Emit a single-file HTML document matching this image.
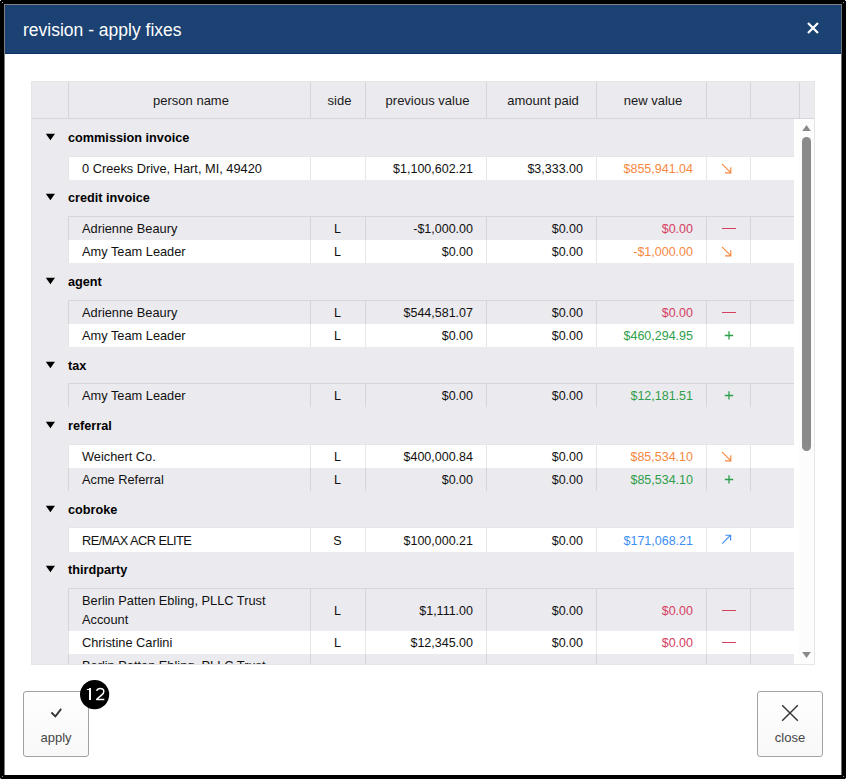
<!DOCTYPE html>
<html><head><meta charset="utf-8"><style>
html,body{margin:0;padding:0;}
body{width:846px;height:779px;background:#000;position:relative;overflow:hidden;font-family:"Liberation Sans",sans-serif;}
#dlg{position:absolute;left:4px;top:4px;width:836px;height:770px;background:#fff;border-left:1px solid #7f7f7f;border-top:1px solid #808080;border-right:1px solid #707070;}
#hdr{position:absolute;left:5px;top:5px;width:836px;height:48px;background:#1b4273;border-bottom:1px solid #0c3265;}
#title{position:absolute;left:23px;top:6px;height:48px;line-height:48px;color:#fff;font-size:17.5px;white-space:nowrap;}
#x{position:absolute;left:805px;top:20px;}
#tbl{position:absolute;left:31px;top:81px;width:782px;height:582px;border:1px solid #e6e6e6;background:#ebeaef;overflow:hidden;}
#clip{position:absolute;left:0;top:0;width:846px;height:665px;overflow:hidden;}
.th{position:absolute;top:83px;height:36px;line-height:36px;font-size:13px;color:#1a1a1a;text-align:center;white-space:nowrap;padding-left:3px;box-sizing:border-box;}
.thb{position:absolute;top:82px;width:1px;height:36px;background:#d6d5da;}
#hline{position:absolute;left:32px;top:118px;width:782px;height:1px;background:#d6d5da;}
.tri{position:absolute;left:44px;}
.gname{position:absolute;left:68px;font-size:12.7px;font-weight:bold;color:#000;white-space:nowrap;}
.hb{position:absolute;left:68px;width:726px;height:1px;}
.row{position:absolute;left:69px;width:725px;}
.vb{position:absolute;width:1px;}
.t{position:absolute;font-size:12.5px;color:#111;white-space:nowrap;}
.name{left:82px;font-size:12.8px;}
.side{left:310px;width:55px;text-align:center;}
.prev{left:365px;width:108px;text-align:right;}
.paid{left:486px;width:97px;text-align:right;}
.new{left:596px;width:97px;text-align:right;}
.ic{position:absolute;}
#sb{position:absolute;left:794px;top:119px;width:20px;height:545px;background:#fff;}
#sbt{position:absolute;left:799px;top:119px;width:15px;height:545px;background:#fcfcfc;}
#thumb{position:absolute;left:802px;top:137px;width:9px;height:314px;border-radius:4.5px;background:#8a8a8a;}
.btn{position:absolute;top:691px;width:64px;height:64px;border:1px solid #a2a2a2;border-radius:3px;background:linear-gradient(#fefefe,#f8f8f8);}
.btxt{position:absolute;font-size:13px;color:#464646;white-space:nowrap;text-align:center;}
#badge{position:absolute;left:80px;top:680px;width:29px;height:29px;border-radius:50%;background:#000;color:#fff;font-size:16px;line-height:29px;text-align:center;}
</style></head><body>
<div id="dlg"></div>
<div id="hdr"></div>
<div id="title">revision - apply fixes</div>
<svg id="x" width="16" height="16" viewBox="0 0 16 16"><path d="M3 3 L13 13 M13 3 L3 13" stroke="#fff" stroke-width="2.2" fill="none"/></svg>
<div id="clip">
<div id="tbl"></div>
<div class="thb" style="left:68px"></div>
<div class="thb" style="left:310px"></div>
<div class="thb" style="left:365px"></div>
<div class="thb" style="left:486px"></div>
<div class="thb" style="left:596px"></div>
<div class="thb" style="left:706px"></div>
<div class="thb" style="left:750px"></div>
<div class="thb" style="left:799px"></div>
<div class="th" style="left:69px;width:241px">person name</div>
<div class="th" style="left:311px;width:54px">side</div>
<div class="th" style="left:366px;width:120px">previous value</div>
<div class="th" style="left:487px;width:109px">amount paid</div>
<div class="th" style="left:597px;width:109px">new value</div>
<div id="hline"></div>
<svg class="tri" style="top:132px" width="13" height="10" viewBox="0 0 13 10"><path d="M1.8 1.8 H11 L6.4 8.2 Z" fill="#000"/></svg>
<div class="gname" style="top:120px;height:37px;line-height:37px">commission invoice</div>
<div class="hb" style="top:156px;background:#e6e6e6"></div>
<div class="row" style="top:157px;height:23px;background:#ffffff"></div>
<div class="vb" style="left:68px;top:157px;height:23px;background:#e6e6e6"></div>
<div class="vb" style="left:310px;top:157px;height:23px;background:#e6e6e6"></div>
<div class="vb" style="left:365px;top:157px;height:23px;background:#e6e6e6"></div>
<div class="vb" style="left:486px;top:157px;height:23px;background:#e6e6e6"></div>
<div class="vb" style="left:596px;top:157px;height:23px;background:#e6e6e6"></div>
<div class="vb" style="left:706px;top:157px;height:23px;background:#e6e6e6"></div>
<div class="vb" style="left:750px;top:157px;height:23px;background:#e6e6e6"></div>
<div class="t name" style="top:157px;line-height:23px">0 Creeks Drive, Hart, MI, 49420</div>
<div class="t side" style="top:158px;line-height:23px"></div>
<div class="t prev" style="top:158px;line-height:23px">$1,100,602.21</div>
<div class="t paid" style="top:158px;line-height:23px">$3,333.00</div>
<div class="t new" style="top:158px;line-height:23px;color:#f7883f">$855,941.04</div>
<svg class="ic" style="left:719px;top:161px" width="16" height="16" viewBox="0 0 16 16"><path d="M3 2.8 L11.8 11.6 M11.8 6.2 V11.8 H6" fill="none" stroke="#f7883f" stroke-width="1.15"/></svg>
<svg class="tri" style="top:192px" width="13" height="10" viewBox="0 0 13 10"><path d="M1.8 1.8 H11 L6.4 8.2 Z" fill="#000"/></svg>
<div class="gname" style="top:180px;height:36px;line-height:36px">credit invoice</div>
<div class="hb" style="top:216px;background:#d6d5da"></div>
<div class="row" style="top:217px;height:23px;background:#ebeaef"></div>
<div class="vb" style="left:68px;top:217px;height:23px;background:#d6d5da"></div>
<div class="vb" style="left:310px;top:217px;height:23px;background:#d6d5da"></div>
<div class="vb" style="left:365px;top:217px;height:23px;background:#d6d5da"></div>
<div class="vb" style="left:486px;top:217px;height:23px;background:#d6d5da"></div>
<div class="vb" style="left:596px;top:217px;height:23px;background:#d6d5da"></div>
<div class="vb" style="left:706px;top:217px;height:23px;background:#d6d5da"></div>
<div class="vb" style="left:750px;top:217px;height:23px;background:#d6d5da"></div>
<div class="t name" style="top:217px;line-height:23px">Adrienne Beaury</div>
<div class="t side" style="top:218px;line-height:23px">L</div>
<div class="t prev" style="top:218px;line-height:23px">-$1,000.00</div>
<div class="t paid" style="top:218px;line-height:23px">$0.00</div>
<div class="t new" style="top:218px;line-height:23px;color:#d6405f">$0.00</div>
<div class="ic" style="left:722px;top:228px;width:14px;height:1.4px;background:#d6405f"></div>
<div class="row" style="top:240px;height:23px;background:#ffffff"></div>
<div class="vb" style="left:68px;top:240px;height:23px;background:#e6e6e6"></div>
<div class="vb" style="left:310px;top:240px;height:23px;background:#e6e6e6"></div>
<div class="vb" style="left:365px;top:240px;height:23px;background:#e6e6e6"></div>
<div class="vb" style="left:486px;top:240px;height:23px;background:#e6e6e6"></div>
<div class="vb" style="left:596px;top:240px;height:23px;background:#e6e6e6"></div>
<div class="vb" style="left:706px;top:240px;height:23px;background:#e6e6e6"></div>
<div class="vb" style="left:750px;top:240px;height:23px;background:#e6e6e6"></div>
<div class="t name" style="top:240px;line-height:23px">Amy Team Leader</div>
<div class="t side" style="top:241px;line-height:23px">L</div>
<div class="t prev" style="top:241px;line-height:23px">$0.00</div>
<div class="t paid" style="top:241px;line-height:23px">$0.00</div>
<div class="t new" style="top:241px;line-height:23px;color:#f7883f">-$1,000.00</div>
<svg class="ic" style="left:719px;top:244px" width="16" height="16" viewBox="0 0 16 16"><path d="M3 2.8 L11.8 11.6 M11.8 6.2 V11.8 H6" fill="none" stroke="#f7883f" stroke-width="1.15"/></svg>
<svg class="tri" style="top:276px" width="13" height="10" viewBox="0 0 13 10"><path d="M1.8 1.8 H11 L6.4 8.2 Z" fill="#000"/></svg>
<div class="gname" style="top:264px;height:37px;line-height:37px">agent</div>
<div class="hb" style="top:300px;background:#d6d5da"></div>
<div class="row" style="top:301px;height:23px;background:#ebeaef"></div>
<div class="vb" style="left:68px;top:301px;height:23px;background:#d6d5da"></div>
<div class="vb" style="left:310px;top:301px;height:23px;background:#d6d5da"></div>
<div class="vb" style="left:365px;top:301px;height:23px;background:#d6d5da"></div>
<div class="vb" style="left:486px;top:301px;height:23px;background:#d6d5da"></div>
<div class="vb" style="left:596px;top:301px;height:23px;background:#d6d5da"></div>
<div class="vb" style="left:706px;top:301px;height:23px;background:#d6d5da"></div>
<div class="vb" style="left:750px;top:301px;height:23px;background:#d6d5da"></div>
<div class="t name" style="top:301px;line-height:23px">Adrienne Beaury</div>
<div class="t side" style="top:302px;line-height:23px">L</div>
<div class="t prev" style="top:302px;line-height:23px">$544,581.07</div>
<div class="t paid" style="top:302px;line-height:23px">$0.00</div>
<div class="t new" style="top:302px;line-height:23px;color:#d6405f">$0.00</div>
<div class="ic" style="left:722px;top:312px;width:14px;height:1.4px;background:#d6405f"></div>
<div class="row" style="top:324px;height:23px;background:#ffffff"></div>
<div class="vb" style="left:68px;top:324px;height:23px;background:#e6e6e6"></div>
<div class="vb" style="left:310px;top:324px;height:23px;background:#e6e6e6"></div>
<div class="vb" style="left:365px;top:324px;height:23px;background:#e6e6e6"></div>
<div class="vb" style="left:486px;top:324px;height:23px;background:#e6e6e6"></div>
<div class="vb" style="left:596px;top:324px;height:23px;background:#e6e6e6"></div>
<div class="vb" style="left:706px;top:324px;height:23px;background:#e6e6e6"></div>
<div class="vb" style="left:750px;top:324px;height:23px;background:#e6e6e6"></div>
<div class="t name" style="top:324px;line-height:23px">Amy Team Leader</div>
<div class="t side" style="top:325px;line-height:23px">L</div>
<div class="t prev" style="top:325px;line-height:23px">$0.00</div>
<div class="t paid" style="top:325px;line-height:23px">$0.00</div>
<div class="t new" style="top:325px;line-height:23px;color:#2f9e4a">$460,294.95</div>
<svg class="ic" style="left:719px;top:326px" width="16" height="16" viewBox="0 0 16 16"><path d="M5.8 9.5 H14.2 M10 5.2 V13.5" fill="none" stroke="#2f9e4a" stroke-width="1.3"/></svg>
<svg class="tri" style="top:360px" width="13" height="10" viewBox="0 0 13 10"><path d="M1.8 1.8 H11 L6.4 8.2 Z" fill="#000"/></svg>
<div class="gname" style="top:348px;height:36px;line-height:36px">tax</div>
<div class="hb" style="top:383px;background:#d6d5da"></div>
<div class="row" style="top:384px;height:23px;background:#ebeaef"></div>
<div class="vb" style="left:68px;top:384px;height:23px;background:#d6d5da"></div>
<div class="vb" style="left:310px;top:384px;height:23px;background:#d6d5da"></div>
<div class="vb" style="left:365px;top:384px;height:23px;background:#d6d5da"></div>
<div class="vb" style="left:486px;top:384px;height:23px;background:#d6d5da"></div>
<div class="vb" style="left:596px;top:384px;height:23px;background:#d6d5da"></div>
<div class="vb" style="left:706px;top:384px;height:23px;background:#d6d5da"></div>
<div class="vb" style="left:750px;top:384px;height:23px;background:#d6d5da"></div>
<div class="t name" style="top:384px;line-height:23px">Amy Team Leader</div>
<div class="t side" style="top:385px;line-height:23px">L</div>
<div class="t prev" style="top:385px;line-height:23px">$0.00</div>
<div class="t paid" style="top:385px;line-height:23px">$0.00</div>
<div class="t new" style="top:385px;line-height:23px;color:#2f9e4a">$12,181.51</div>
<svg class="ic" style="left:719px;top:386px" width="16" height="16" viewBox="0 0 16 16"><path d="M5.8 9.5 H14.2 M10 5.2 V13.5" fill="none" stroke="#2f9e4a" stroke-width="1.3"/></svg>
<svg class="tri" style="top:420px" width="13" height="10" viewBox="0 0 13 10"><path d="M1.8 1.8 H11 L6.4 8.2 Z" fill="#000"/></svg>
<div class="gname" style="top:408px;height:37px;line-height:37px">referral</div>
<div class="hb" style="top:444px;background:#e6e6e6"></div>
<div class="row" style="top:445px;height:23px;background:#ffffff"></div>
<div class="vb" style="left:68px;top:445px;height:23px;background:#e6e6e6"></div>
<div class="vb" style="left:310px;top:445px;height:23px;background:#e6e6e6"></div>
<div class="vb" style="left:365px;top:445px;height:23px;background:#e6e6e6"></div>
<div class="vb" style="left:486px;top:445px;height:23px;background:#e6e6e6"></div>
<div class="vb" style="left:596px;top:445px;height:23px;background:#e6e6e6"></div>
<div class="vb" style="left:706px;top:445px;height:23px;background:#e6e6e6"></div>
<div class="vb" style="left:750px;top:445px;height:23px;background:#e6e6e6"></div>
<div class="t name" style="top:445px;line-height:23px">Weichert Co.</div>
<div class="t side" style="top:446px;line-height:23px">L</div>
<div class="t prev" style="top:446px;line-height:23px">$400,000.84</div>
<div class="t paid" style="top:446px;line-height:23px">$0.00</div>
<div class="t new" style="top:446px;line-height:23px;color:#f7883f">$85,534.10</div>
<svg class="ic" style="left:719px;top:449px" width="16" height="16" viewBox="0 0 16 16"><path d="M3 2.8 L11.8 11.6 M11.8 6.2 V11.8 H6" fill="none" stroke="#f7883f" stroke-width="1.15"/></svg>
<div class="row" style="top:468px;height:23px;background:#ebeaef"></div>
<div class="vb" style="left:68px;top:468px;height:23px;background:#d6d5da"></div>
<div class="vb" style="left:310px;top:468px;height:23px;background:#d6d5da"></div>
<div class="vb" style="left:365px;top:468px;height:23px;background:#d6d5da"></div>
<div class="vb" style="left:486px;top:468px;height:23px;background:#d6d5da"></div>
<div class="vb" style="left:596px;top:468px;height:23px;background:#d6d5da"></div>
<div class="vb" style="left:706px;top:468px;height:23px;background:#d6d5da"></div>
<div class="vb" style="left:750px;top:468px;height:23px;background:#d6d5da"></div>
<div class="t name" style="top:468px;line-height:23px">Acme Referral</div>
<div class="t side" style="top:469px;line-height:23px">L</div>
<div class="t prev" style="top:469px;line-height:23px">$0.00</div>
<div class="t paid" style="top:469px;line-height:23px">$0.00</div>
<div class="t new" style="top:469px;line-height:23px;color:#2f9e4a">$85,534.10</div>
<svg class="ic" style="left:719px;top:470px" width="16" height="16" viewBox="0 0 16 16"><path d="M5.8 9.5 H14.2 M10 5.2 V13.5" fill="none" stroke="#2f9e4a" stroke-width="1.3"/></svg>
<svg class="tri" style="top:504px" width="13" height="10" viewBox="0 0 13 10"><path d="M1.8 1.8 H11 L6.4 8.2 Z" fill="#000"/></svg>
<div class="gname" style="top:492px;height:36px;line-height:36px">cobroke</div>
<div class="hb" style="top:527px;background:#e6e6e6"></div>
<div class="row" style="top:528px;height:24px;background:#ffffff"></div>
<div class="vb" style="left:68px;top:528px;height:24px;background:#e6e6e6"></div>
<div class="vb" style="left:310px;top:528px;height:24px;background:#e6e6e6"></div>
<div class="vb" style="left:365px;top:528px;height:24px;background:#e6e6e6"></div>
<div class="vb" style="left:486px;top:528px;height:24px;background:#e6e6e6"></div>
<div class="vb" style="left:596px;top:528px;height:24px;background:#e6e6e6"></div>
<div class="vb" style="left:706px;top:528px;height:24px;background:#e6e6e6"></div>
<div class="vb" style="left:750px;top:528px;height:24px;background:#e6e6e6"></div>
<div class="t name" style="top:529px;line-height:24px;letter-spacing:-0.55px">RE/MAX ACR ELITE</div>
<div class="t side" style="top:529px;line-height:24px">S</div>
<div class="t prev" style="top:529px;line-height:24px">$100,000.21</div>
<div class="t paid" style="top:529px;line-height:24px">$0.00</div>
<div class="t new" style="top:529px;line-height:24px;color:#3d8ef2">$171,068.21</div>
<svg class="ic" style="left:719px;top:531px" width="16" height="16" viewBox="0 0 16 16"><path d="M3.2 12.6 L11.6 4.2 M6.4 4.2 H11.6 V9.5" fill="none" stroke="#3d8ef2" stroke-width="1.15"/></svg>
<svg class="tri" style="top:564px" width="13" height="10" viewBox="0 0 13 10"><path d="M1.8 1.8 H11 L6.4 8.2 Z" fill="#000"/></svg>
<div class="gname" style="top:552px;height:36px;line-height:36px">thirdparty</div>
<div class="hb" style="top:588px;background:#d6d5da"></div>
<div class="row" style="top:589px;height:42px;background:#ebeaef"></div>
<div class="vb" style="left:68px;top:589px;height:42px;background:#d6d5da"></div>
<div class="vb" style="left:310px;top:589px;height:42px;background:#d6d5da"></div>
<div class="vb" style="left:365px;top:589px;height:42px;background:#d6d5da"></div>
<div class="vb" style="left:486px;top:589px;height:42px;background:#d6d5da"></div>
<div class="vb" style="left:596px;top:589px;height:42px;background:#d6d5da"></div>
<div class="vb" style="left:706px;top:589px;height:42px;background:#d6d5da"></div>
<div class="vb" style="left:750px;top:589px;height:42px;background:#d6d5da"></div>
<div class="t name" style="top:591px;line-height:19px">Berlin Patten Ebling, PLLC Trust<br>Account</div>
<div class="t side" style="top:590px;line-height:42px">L</div>
<div class="t prev" style="top:590px;line-height:42px">$1,111.00</div>
<div class="t paid" style="top:590px;line-height:42px">$0.00</div>
<div class="t new" style="top:590px;line-height:42px;color:#d6405f">$0.00</div>
<div class="ic" style="left:722px;top:610px;width:14px;height:1.4px;background:#d6405f"></div>
<div class="row" style="top:631px;height:23px;background:#ffffff"></div>
<div class="vb" style="left:68px;top:631px;height:23px;background:#e6e6e6"></div>
<div class="vb" style="left:310px;top:631px;height:23px;background:#e6e6e6"></div>
<div class="vb" style="left:365px;top:631px;height:23px;background:#e6e6e6"></div>
<div class="vb" style="left:486px;top:631px;height:23px;background:#e6e6e6"></div>
<div class="vb" style="left:596px;top:631px;height:23px;background:#e6e6e6"></div>
<div class="vb" style="left:706px;top:631px;height:23px;background:#e6e6e6"></div>
<div class="vb" style="left:750px;top:631px;height:23px;background:#e6e6e6"></div>
<div class="t name" style="top:631px;line-height:23px">Christine Carlini</div>
<div class="t side" style="top:632px;line-height:23px">L</div>
<div class="t prev" style="top:632px;line-height:23px">$12,345.00</div>
<div class="t paid" style="top:632px;line-height:23px">$0.00</div>
<div class="t new" style="top:632px;line-height:23px;color:#d6405f">$0.00</div>
<div class="ic" style="left:722px;top:642px;width:14px;height:1.4px;background:#d6405f"></div>
<div class="row" style="top:654px;height:43px;background:#ebeaef"></div>
<div class="vb" style="left:68px;top:654px;height:43px;background:#d6d5da"></div>
<div class="vb" style="left:310px;top:654px;height:43px;background:#d6d5da"></div>
<div class="vb" style="left:365px;top:654px;height:43px;background:#d6d5da"></div>
<div class="vb" style="left:486px;top:654px;height:43px;background:#d6d5da"></div>
<div class="vb" style="left:596px;top:654px;height:43px;background:#d6d5da"></div>
<div class="vb" style="left:706px;top:654px;height:43px;background:#d6d5da"></div>
<div class="vb" style="left:750px;top:654px;height:43px;background:#d6d5da"></div>
<div class="t name" style="top:656px;line-height:19px">Berlin Patten Ebling, PLLC Trust<br>Account</div>
<div class="t side" style="top:655px;line-height:43px">L</div>
<div class="t prev" style="top:655px;line-height:43px">$1,111.00</div>
<div class="t paid" style="top:655px;line-height:43px">$0.00</div>
<div class="t new" style="top:655px;line-height:43px;color:#d6405f">$0.00</div>
<div class="ic" style="left:722px;top:675px;width:14px;height:1.4px;background:#d6405f"></div>
<div id="sb"></div>
<div id="sbt"></div>
<svg style="position:absolute;left:801px;top:124px" width="11" height="8" viewBox="0 0 11 8"><path d="M1.2 7 L5.5 1 L9.8 7 Z" fill="#8a8a8a"/></svg>
<div id="thumb"></div>
<svg style="position:absolute;left:801px;top:651px" width="11" height="8" viewBox="0 0 11 8"><path d="M1.2 1 L9.8 1 L5.5 7 Z" fill="#8a8a8a"/></svg>
<div style="position:absolute;left:31px;top:664px;width:784px;height:1px;background:#e6e6e6"></div>
</div>
<div class="btn" style="left:23px"></div>
<svg style="position:absolute;left:49px;top:707px" width="15" height="13" viewBox="0 0 15 13"><path d="M2.4 5.5 L6.4 9.3 L12.2 1.9" stroke="#333" stroke-width="1.8" fill="none"/></svg>
<div class="btxt" style="left:23px;width:66px;top:730px">apply</div>
<svg style="position:absolute;left:80px;top:680px" width="30" height="30" viewBox="0 0 30 30"><circle cx="14.6" cy="14.6" r="14.6" fill="#000"/><path d="M10 8 V20" stroke="#fff" stroke-width="2" fill="none"/><path d="M6.9 9.5 H9 L10 8.4" stroke="#fff" stroke-width="1.1" fill="none"/><path d="M16.6 10.8 C17.3 9 18.6 8.4 20.2 8.4 C22.3 8.4 23.8 9.5 23.8 11.4 C23.8 12.8 23.1 13.7 21.8 14.9 L16.7 19.3 V19.4 H24.3" stroke="#fff" stroke-width="1.5" fill="none" stroke-linejoin="round"/></svg>
<div class="btn" style="left:757px"></div>
<svg style="position:absolute;left:781px;top:704px" width="18" height="18" viewBox="0 0 18 18"><path d="M1.2 1.2 L16.8 16.8 M16.8 1.2 L1.2 16.8" stroke="#333" stroke-width="1.4" fill="none"/></svg>
<div class="btxt" style="left:757px;width:66px;top:730px">close</div>
<div style="position:absolute;left:0;top:0;width:1px;height:1px;background:#d8d8d8"></div>
<div style="position:absolute;left:2px;top:2px;width:1px;height:1px;background:#a8a8a8"></div>
<div style="position:absolute;left:845px;top:0;width:1px;height:1px;background:#d8d8d8"></div>
<div style="position:absolute;left:843px;top:2px;width:1px;height:1px;background:#a8a8a8"></div>
<div style="position:absolute;left:2px;top:776px;width:1px;height:1px;background:#8a8a8a"></div>
<div style="position:absolute;left:0;top:778px;width:1px;height:1px;background:#9a9a9a"></div>
<div style="position:absolute;left:843px;top:776px;width:1px;height:1px;background:#8a8a8a"></div>
<div style="position:absolute;left:845px;top:778px;width:1px;height:1px;background:#9a9a9a"></div>
</body></html>
